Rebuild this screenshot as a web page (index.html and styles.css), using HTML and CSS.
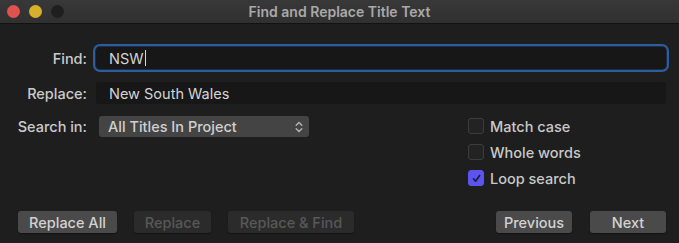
FILE: index.html
```html
<!DOCTYPE html>
<html>
<head>
<meta charset="utf-8">
<link rel="stylesheet" href="styles.css">
</head>
<body>
<div class="window">
  <div class="titlebar">
    <div class="lights">
      <span class="light red"></span>
      <span class="light yellow"></span>
      <span class="light gray"></span>
    </div>
    <div class="title">Find and Replace Title Text</div>
  </div>
  <div class="content">
    <div class="row row-find">
      <label class="lbl">Find:</label>
      <div class="field focus">NSW<span class="caret"></span></div>
    </div>
    <div class="row row-replace">
      <label class="lbl">Replace:</label>
      <div class="field">New South Wales</div>
    </div>
    <div class="middle">
      <div class="row row-search">
        <label class="lbl">Search in:</label>
        <div class="select">
          <span>All Titles In Project</span>
          <svg class="chev" width="8" height="12" viewBox="0 0 8 12"><path d="M1.2 4.3 L4 1.5 L6.8 4.3 M1.2 7.7 L4 10.5 L6.8 7.7" fill="none" stroke="#b5b5b5" stroke-width="1.4" stroke-linecap="round" stroke-linejoin="round"/></svg>
        </div>
      </div>
      <div class="checks">
        <div class="check"><span class="box"></span><span>Match case</span></div>
        <div class="check"><span class="box"></span><span>Whole words</span></div>
        <div class="check"><span class="box on"><svg width="11" height="11" viewBox="0 0 11 11"><path d="M2.5 5.8 L4.6 8.2 L8.6 2.5" fill="none" stroke="#1b1a4a" stroke-width="1.7" stroke-linecap="round" stroke-linejoin="round"/></svg></span><span>Loop search</span></div>
      </div>
    </div>
    <div class="buttons">
      <div class="group">
        <button class="btn w-all">Replace All</button>
        <button class="btn off w-rep">Replace</button>
        <button class="btn off w-rf">Replace &amp; Find</button>
      </div>
      <div class="group right">
        <button class="btn w-nav">Previous</button>
        <button class="btn w-nav">Next</button>
      </div>
    </div>
  </div>
</div>
</body>
</html>
```
FILE: styles.css
```css
* { box-sizing: border-box; }
html, body { margin: 0; padding: 0; }
body {
  background: #1e1e1e;
  font-family: "Inter", "Liberation Sans", sans-serif;
  font-size: 14.5px;
  color: #cfcfcf;
  width: 679px;
  height: 243px;
  overflow: hidden;
}
.window { width: 679px; height: 243px; display: flex; flex-direction: column; }
.titlebar {
  height: 24px;
  background: linear-gradient(#383838, #303030);
  border-bottom: 1px solid #121212;
  display: flex;
  align-items: center;
  position: relative;
}
.lights { display: flex; gap: 9px; padding-left: 7px; position: relative; z-index: 1; }
.light { width: 13px; height: 13px; border-radius: 50%; display: block; }
.red { background: #e0524d; }
.yellow { background: #d9b02b; }
.gray { background: #1f1f1f; }
.title {
  position: absolute;
  left: 0; right: 0; top: 0; bottom: 0;
  display: flex; align-items: center; justify-content: center;
  color: #a9a9a9;
  font-weight: 600;
  font-size: 14px;
}
.content { padding: 23px 13px 0 0; flex: 1; display: flex; flex-direction: column; }
.row { display: flex; align-items: center; }
.lbl {
  width: 87px;
  text-align: right;
  color: #cbcbcb;
  font-weight: 500;
  flex: none;
}
.field {
  margin-left: 9px;
  flex: 1;
  height: 22px;
  background: #171717;
  border-radius: 3px;
  padding-left: 13px;
  display: flex;
  align-items: center;
  color: #d4d4d4;
}
.field.focus {
  box-shadow: 0 0 0 1px #1c2d44, 0 0 0 3px #2d5d9c;
  border-radius: 4px;
}
.caret { display: inline-block; width: 1px; height: 16px; background: #d8d8d8; margin-left: 1px; }
.row-replace { margin-top: 13px; }
.middle { display: flex; margin-top: 12px; }
.row-search { align-items: flex-start; height: 22px; }
.row-search .lbl { line-height: 21px; }
.select {
  margin-left: 12px;
  width: 210px;
  height: 21px;
  background: #444444;
  border-radius: 3px;
  display: flex;
  align-items: center;
  justify-content: space-between;
  padding: 0 6px 0 9px;
  color: #d0d0d0;
  font-weight: 500;
}
.chev { display: block; }
.checks { margin-left: 159px; margin-top: 2px; display: flex; flex-direction: column; gap: 10px; }
.check { display: flex; align-items: center; gap: 6px; height: 16px; color: #c9c9c9; font-weight: 500; }
.box {
  width: 16px; height: 16px;
  border: 1px solid #3d3d3d;
  background: #232323;
  border-radius: 3px;
  display: flex; align-items: center; justify-content: center;
}
.box.on { background: #5b55ee; border-color: #5b55ee; }
.buttons {
  margin-top: auto;
  margin-bottom: 10px;
  padding-left: 18px;
  display: flex;
  justify-content: space-between;
}
.group { display: flex; gap: 17px; }
.group.right { gap: 18px; }
.btn {
  font-family: inherit;
  font-size: 14.5px;
  font-weight: 500;
  height: 22px;
  border: none;
  border-radius: 3px;
  background: #4a4a4a;
  color: #d2d2d2;
  padding: 0;
  box-shadow: 0 1px 1px rgba(0,0,0,0.4);
}
.btn.off { background: #2b2b2b; color: #585858; }
.w-all { width: 99px; }
.w-rep { width: 77px; }
.w-rf { width: 126px; }
.w-nav { width: 76px; }
```
